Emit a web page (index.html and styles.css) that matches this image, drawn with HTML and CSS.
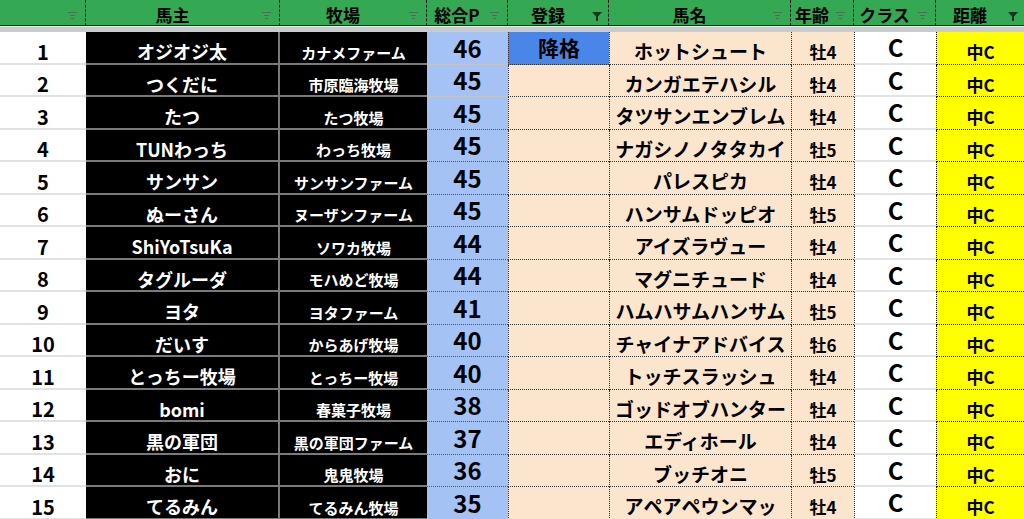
FILE: index.html
```html
<!DOCTYPE html>
<html lang="ja">
<head>
<meta charset="utf-8">
<title>ランキング</title>
<link rel="stylesheet" href="styles.css">
</head>
<body>
<div class="sheet">
  <div class="row head">
    <div class="hc"><span></span><i class="flt"></i></div>
    <div class="hc"><span>馬主</span><i class="flt"></i></div>
    <div class="hc"><span>牧場</span><i class="flt"></i></div>
    <div class="hc"><span>総合P</span><i class="flt"></i></div>
    <div class="hc"><span>登録</span><svg class="fun" viewBox="0 0 10 10"><path d="M0 1h10L6 5.5V10H4V5.5z"/></svg></div>
    <div class="hc"><span>馬名</span><i class="flt"></i></div>
    <div class="hc"><span>年齢</span><i class="flt"></i></div>
    <div class="hc"><span>クラス</span><i class="flt"></i></div>
    <div class="hc"><span>距離</span><svg class="fun" viewBox="0 0 10 10"><path d="M0 1h10L6 5.5V10H4V5.5z"/></svg></div>
  </div>
  <div class="band"></div>

  <div class="row"><div class="c a">1</div><div class="c b">オジオジ太</div><div class="c m">カナメファーム</div><div class="c d solid">46</div><div class="c e down">降格</div><div class="c f">ホットシュート</div><div class="c g">牡4</div><div class="c h">C</div><div class="c i">中C</div></div>
  <div class="row"><div class="c a">2</div><div class="c b">つくだに</div><div class="c m">市原臨海牧場</div><div class="c d solid">45</div><div class="c e"></div><div class="c f">カンガエテハシル</div><div class="c g">牡4</div><div class="c h">C</div><div class="c i">中C</div></div>
  <div class="row"><div class="c a">3</div><div class="c b">たつ</div><div class="c m">たつ牧場</div><div class="c d">45</div><div class="c e"></div><div class="c f">タツサンエンブレム</div><div class="c g">牡4</div><div class="c h">C</div><div class="c i">中C</div></div>
  <div class="row"><div class="c a">4</div><div class="c b">TUNわっち</div><div class="c m">わっち牧場</div><div class="c d">45</div><div class="c e"></div><div class="c f">ナガシノノタタカイ</div><div class="c g">牡5</div><div class="c h">C</div><div class="c i">中C</div></div>
  <div class="row"><div class="c a">5</div><div class="c b">サンサン</div><div class="c m">サンサンファーム</div><div class="c d">45</div><div class="c e"></div><div class="c f">パレスピカ</div><div class="c g">牡4</div><div class="c h">C</div><div class="c i">中C</div></div>
  <div class="row"><div class="c a">6</div><div class="c b">ぬーさん</div><div class="c m">ヌーザンファーム</div><div class="c d">45</div><div class="c e"></div><div class="c f">ハンサムドッピオ</div><div class="c g">牡5</div><div class="c h">C</div><div class="c i">中C</div></div>
  <div class="row"><div class="c a">7</div><div class="c b">ShiYoTsuKa</div><div class="c m">ソワカ牧場</div><div class="c d">44</div><div class="c e"></div><div class="c f">アイズラヴュー</div><div class="c g">牡4</div><div class="c h">C</div><div class="c i">中C</div></div>
  <div class="row"><div class="c a">8</div><div class="c b">タグルーダ</div><div class="c m">モハめど牧場</div><div class="c d">44</div><div class="c e"></div><div class="c f">マグニチュード</div><div class="c g">牡4</div><div class="c h">C</div><div class="c i">中C</div></div>
  <div class="row"><div class="c a">9</div><div class="c b">ヨタ</div><div class="c m">ヨタファーム</div><div class="c d">41</div><div class="c e"></div><div class="c f">ハムハサムハンサム</div><div class="c g">牡5</div><div class="c h">C</div><div class="c i">中C</div></div>
  <div class="row"><div class="c a">10</div><div class="c b">だいす</div><div class="c m">からあげ牧場</div><div class="c d">40</div><div class="c e"></div><div class="c f">チャイナアドバイス</div><div class="c g">牡6</div><div class="c h">C</div><div class="c i">中C</div></div>
  <div class="row"><div class="c a">11</div><div class="c b">とっちー牧場</div><div class="c m">とっちー牧場</div><div class="c d">40</div><div class="c e"></div><div class="c f">トッチスラッシュ</div><div class="c g">牡4</div><div class="c h">C</div><div class="c i">中C</div></div>
  <div class="row"><div class="c a">12</div><div class="c b">bomi</div><div class="c m">春菓子牧場</div><div class="c d">38</div><div class="c e"></div><div class="c f">ゴッドオブハンター</div><div class="c g">牡4</div><div class="c h">C</div><div class="c i">中C</div></div>
  <div class="row"><div class="c a">13</div><div class="c b">黒の軍団</div><div class="c m">黒の軍団ファーム</div><div class="c d">37</div><div class="c e"></div><div class="c f">エディホール</div><div class="c g">牡4</div><div class="c h">C</div><div class="c i">中C</div></div>
  <div class="row"><div class="c a">14</div><div class="c b">おに</div><div class="c m">鬼鬼牧場</div><div class="c d">36</div><div class="c e"></div><div class="c f">ブッチオニ</div><div class="c g">牡5</div><div class="c h">C</div><div class="c i">中C</div></div>
  <div class="row"><div class="c a">15</div><div class="c b">てるみん</div><div class="c m">てるみん牧場</div><div class="c d">35</div><div class="c e"></div><div class="c f">アペアペウンマッ</div><div class="c g">牡4</div><div class="c h">C</div><div class="c i">中C</div></div>
</div>
</body>
</html>
```

FILE: styles.css
```css
* { box-sizing: border-box; }
html, body { margin: 0; padding: 0; background: #fff; }
body {
  width: 1024px;
  height: 519px;
  overflow: hidden;
  font-family: "Noto Sans CJK JP", "Noto Sans", sans-serif;
  font-weight: 700;
  color: #000;
}
.sheet { display: flex; flex-direction: column; }
.row {
  display: grid;
  grid-template-columns: 86px 194px 147px 81px 101px 182px 63px 82px 88px;
  grid-template-rows: 32.5px;
  height: 32.5px;
  flex: none;
}
.head {
  grid-template-rows: 26px;
  height: 26px;
  background: #34a853;
  border-bottom: 1px solid #1d2b20;
}
.band {
  height: 6px;
  flex: none;
  border-top: 1px solid #e6e8ea;
  background: #c9cccf;
}
.hc {
  position: relative;
  display: flex;
  align-items: center;
  justify-content: center;
  padding: 2px 20px 0 0;
  font-size: 17px;
  line-height: 1;
  border-right: 1px dashed #1a1a1a;
}
.hc:last-child { border-right: none; }
.flt {
  position: absolute;
  right: 8px;
  top: 12px;
  width: 9px;
  height: 7px;
  background:
    linear-gradient(#4b6b52, #4b6b52) 0 0 / 9px 1px no-repeat,
    linear-gradient(#4b6b52, #4b6b52) 2px 3px / 5px 1px no-repeat,
    linear-gradient(#4b6b52, #4b6b52) 3px 6px / 3px 1px no-repeat;
}
.fun {
  position: absolute;
  right: 6px;
  top: 11px;
  width: 10px;
  height: 10px;
  fill: #16361f;
}
.c {
  display: flex;
  align-items: center;
  justify-content: center;
  min-height: 0;
  line-height: 1;
  white-space: nowrap;
}
.a {
  font-size: 20px;
  padding-top: 9px;
  border-bottom: 2px solid #e2e2e2;
}
.b {
  background: #000;
  color: #fff;
  font-size: 18px;
  padding-top: 8px;
  border-bottom: 2px solid #7a7a7a;
  border-right: 2px solid #7a7a7a;
}
.m {
  background: #000;
  color: #fff;
  font-size: 15px;
  padding-top: 10px;
  border-bottom: 2px solid #7a7a7a;
}
.d {
  background: #a4c2f4;
  font-size: 24px;
  border-bottom: 1px dotted #555;
}
.d.solid { border-bottom: 1px solid #c4c4c4; }
.e {
  background: #fce5cd;
  font-size: 21px;
  border-left: 1px dotted #333;
  border-bottom: 1px dotted #333;
}
.e.down { background: #4a86e8; }
.f {
  background: #fce5cd;
  font-size: 19px;
  padding-top: 6px;
  border-left: 1px dotted #333;
  border-bottom: 1px dotted #333;
}
.g {
  background: #fce5cd;
  font-size: 17px;
  padding-top: 8px;
  border-left: 1px dotted #333;
  border-bottom: 1px dotted #333;
}
.h {
  background: #fff;
  font-size: 24px;
  border-left: 1px dotted #333;
  border-bottom: 2px solid #e3e3e3;
}
.i {
  background: #ffff00;
  font-size: 17px;
  padding-top: 8px;
  border-left: 1px dotted #111;
  border-bottom: 1px dotted #111;
}
```
